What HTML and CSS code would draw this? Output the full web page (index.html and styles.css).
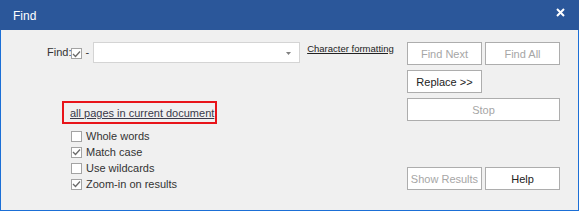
FILE: index.html
```html
<!DOCTYPE html>
<html>
<head>
<meta charset="utf-8">
<link rel="stylesheet" href="styles.css">
</head>
<body>
<div class="window">
  <div class="titlebar">
    <span class="title">Find</span>
    <svg class="close" width="9" height="9" viewBox="0 0 9 9"><path d="M1 1 L8 8 M8 1 L1 8" stroke="#fff" stroke-width="2"/></svg>
  </div>
  <div class="content">
    <div class="left">
      <div class="findrow">
        <span class="label">Find:</span>
        <span class="cb checked small"><svg width="9" height="8" viewBox="0 0 9 8"><path d="M1 4 L3.5 6.5 L8 1.5" fill="none" stroke="#6b6b6b" stroke-width="1.3"/></svg></span>
        <span class="dash">-</span>
        <div class="combo"><svg class="arrow" width="5" height="3" viewBox="0 0 5 3"><path d="M0 0 H5 L2.5 3 Z" fill="#808080"/></svg></div>
        <a class="charfmt">Character formatting</a>
      </div>
      <div class="scope"><a class="scopelink">all pages in current document</a></div>
      <ul class="opts">
        <li><span class="cb"></span><span>Whole words</span></li>
        <li><span class="cb checked"><svg width="9" height="8" viewBox="0 0 9 8"><path d="M1 4 L3.5 6.5 L8 1.5" fill="none" stroke="#6b6b6b" stroke-width="1.3"/></svg></span><span>Match case</span></li>
        <li><span class="cb"></span><span>Use wildcards</span></li>
        <li><span class="cb checked"><svg width="9" height="8" viewBox="0 0 9 8"><path d="M1 4 L3.5 6.5 L8 1.5" fill="none" stroke="#6b6b6b" stroke-width="1.3"/></svg></span><span>Zoom-in on results</span></li>
      </ul>
    </div>
    <div class="right">
      <div class="btnrow">
        <button class="btn disabled">Find Next</button>
        <button class="btn disabled">Find All</button>
      </div>
      <div class="btnrow">
        <button class="btn">Replace &gt;&gt;</button>
      </div>
      <div class="btnrow">
        <button class="btn wide disabled">Stop</button>
      </div>
      <div class="btnrow bottom">
        <button class="btn disabled">Show Results</button>
        <button class="btn">Help</button>
      </div>
    </div>
  </div>
</div>
</body>
</html>
```

FILE: styles.css
```css
html, body {
  margin: 0;
  padding: 0;
  background: #f0f0f0;
}
.window {
  width: 579px;
  height: 211px;
  box-sizing: border-box;
  border: 1px solid #1b6fd6;
  border-top: none;
  background: #f0f0f0;
  font-family: "Liberation Sans", Arial, sans-serif;
  font-size: 11px;
  color: #333;
  display: flex;
  flex-direction: column;
}
.titlebar {
  height: 30px;
  margin: 0 -1px;
  background: #2b579a;
  display: flex;
  align-items: center;
  justify-content: space-between;
  padding: 0 14px 0 13px;
  color: #fff;
}
.title {
  font-size: 12px;
  margin-top: 1px;
}
.close {
  margin-top: -6px;
}
.content {
  flex: 1;
  display: flex;
}
.left {
  flex: 1;
  min-width: 0;
  padding-top: 12px;
}
.findrow {
  display: flex;
  align-items: flex-start;
  padding-left: 46px;
  height: 21px;
}
.label {
  margin-top: 4px;
  margin-right: 0;
}
.cb {
  width: 11px;
  height: 11px;
  border: 1px solid #a3a3a3;
  background: #fff;
  box-sizing: border-box;
  display: inline-flex;
  align-items: center;
  justify-content: center;
  flex: none;
}
.cb.small {
  margin-top: 6px;
}
.cb svg {
  display: block;
}
.dash {
  margin: 4px 4px 0 3px;
}
.combo {
  width: 207px;
  height: 21px;
  box-sizing: border-box;
  border: 1px solid #d4d4d4;
  background: #fff;
  position: relative;
  flex: none;
}
.arrow {
  position: absolute;
  right: 8px;
  top: 9px;
}
.charfmt {
  margin-left: 7px;
  font-size: 9.5px;
  text-decoration: underline;
  color: #222;
  margin-top: 1px;
  white-space: nowrap;
}
.scope {
  margin: 38px 0 0 61px;
  width: 155px;
  height: 23px;
  box-sizing: border-box;
  border: 2px solid #e8141a;
  padding: 4px 0 0 6px;
}
.scopelink {
  text-decoration: underline;
  color: #3a3a4a;
  white-space: nowrap;
}
.opts {
  list-style: none;
  margin: 4px 0 0 70px;
  padding: 0;
}
.opts li {
  display: flex;
  align-items: center;
  height: 16px;
  gap: 4px;
}
.right {
  width: 153px;
  margin-right: 18px;
  padding-top: 12px;
  display: flex;
  flex-direction: column;
}
.btnrow {
  display: flex;
  gap: 3px;
  margin-bottom: 5px;
}
.btnrow.bottom {
  margin-top: 41px;
}
.btn {
  width: 75px;
  height: 23px;
  box-sizing: border-box;
  border: 1px solid #adadad;
  background: #fff;
  font-family: "Liberation Sans", Arial, sans-serif;
  font-size: 11px;
  color: #222;
  padding: 0;
  margin: 0;
  white-space: nowrap;
}
.btn.wide {
  width: 153px;
}
.btn.disabled {
  color: #a6a6a6;
}
```
